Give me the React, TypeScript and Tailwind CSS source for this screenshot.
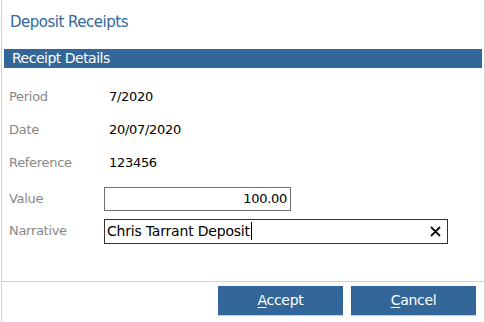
import React from "react";

const font = { fontFamily: "Tahoma, 'DejaVu Sans', sans-serif" };

function InfoRow({ label, value }: { label: string; value: string }) {
  return (
    <div className="flex items-center h-[33px]">
      <span className="w-[100px] pl-[7px] text-[#888888]">{label}</span>
      <span className="pl-[7px] text-black">{value}</span>
    </div>
  );
}

export default function App() {
  return (
    <div
      className="ml-px w-[484px] h-[322px] flex flex-col bg-white border-x border-[#d2d2d2] text-[13px] tracking-[-0.3px]"
      style={font}
    >
      <h1 className="text-[15px] leading-[20px] text-[#336699] pl-[8px] pt-[12px] tracking-[-0.5px]">
        Deposit Receipts
      </h1>
      <div className="mt-[17px] mx-[2px] h-[19px] bg-[#336699] text-white text-[14px] leading-[19px] pl-[8px] tracking-[-0.5px]">
        Receipt Details
      </div>
      <div className="mt-[12px] flex flex-col">
        <InfoRow label="Period" value="7/2020" />
        <InfoRow label="Date" value="20/07/2020" />
        <InfoRow label="Reference" value="123456" />
      </div>
      <div className="mt-[4px] flex flex-col">
        <div className="flex items-center h-[32px]">
          <span className="w-[102px] pl-[7px] text-[#888888]">Value</span>
          <div className="w-[187px] h-[24px] border border-[#6e6e6e] flex items-center justify-end pr-[3px] text-black">
            100.00
          </div>
        </div>
        <div className="flex items-center h-[32px]">
          <span className="w-[102px] pl-[7px] text-[#888888]">Narrative</span>
          <div className="w-[344px] h-[25px] border border-[#333333] flex items-center pl-[2px] text-black">
            <span className="text-[14px] tracking-[-0.2px]">Chris Tarrant Deposit</span>
            <span className="w-px h-[18px] bg-black ml-px" />
            <span className="ml-auto mr-[6px] flex items-center">
              <svg width="11" height="11" viewBox="0 0 11 11">
                <path d="M1 1 L10 10 M10 1 L1 10" stroke="#111" strokeWidth="1.8" />
              </svg>
            </span>
          </div>
        </div>
      </div>
      <div className="mt-auto border-t border-[#d2d2d2] flex justify-end gap-[8px] pt-[4px] pb-[6px] pr-[8px]">
        <button className="w-[125px] h-[30px] bg-[#336699] text-white text-[14px] border-b border-[#c8d2dc]">
          <span className="underline underline-offset-2">A</span>ccept
        </button>
        <button className="w-[125px] h-[30px] bg-[#336699] text-white text-[14px] border-b border-[#c8d2dc]">
          <span className="underline underline-offset-2">C</span>ancel
        </button>
      </div>
    </div>
  );
}
